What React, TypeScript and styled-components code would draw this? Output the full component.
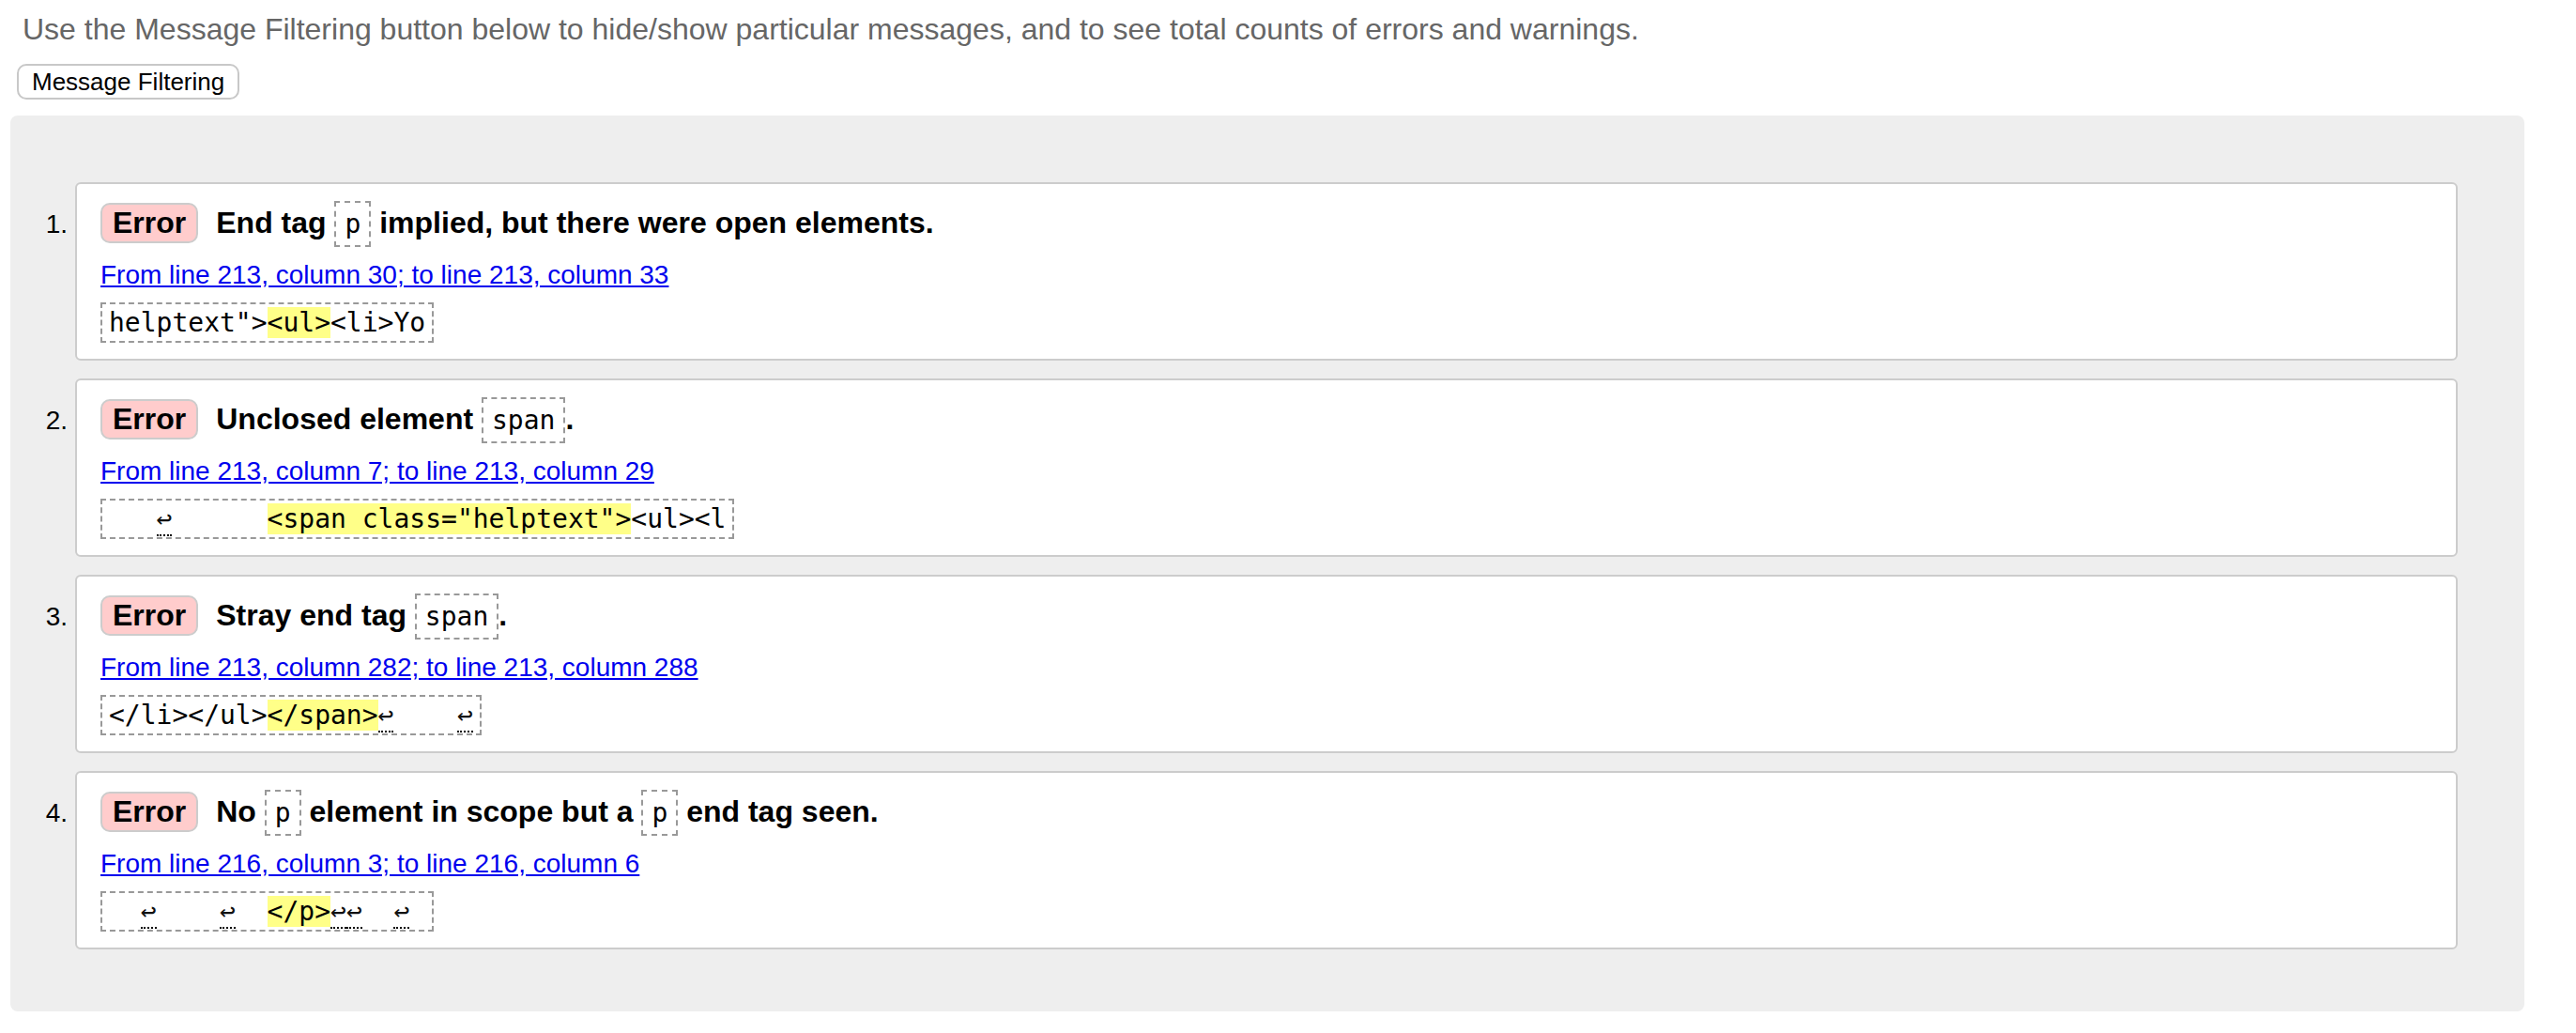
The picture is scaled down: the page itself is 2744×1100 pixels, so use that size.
import React from "react";
import styled, { createGlobalStyle } from "styled-components";

const GlobalStyle = createGlobalStyle`
  html, body { margin: 0; padding: 0; background: #fff; }
  body { font-family: "Liberation Sans", Arial, Helvetica, sans-serif; color: #000; }
`;

const Page = styled.div`
  width: 2744px;
  height: 1100px;
  box-sizing: border-box;
  padding: 13px 55px 0 11px;
`;

const Intro = styled.p`
  margin: 0 0 18px 13px;
  font-size: 32px;
  line-height: normal;
  color: #666;
`;

const FilterButton = styled.button`
  display: block;
  box-sizing: border-box;
  height: 38px;
  margin: 0 0 0 7px;
  padding: 0 14px;
  font-family: "Liberation Sans", Arial, sans-serif;
  font-size: 26px;
  color: #000;
  background: #fff;
  border: 2px solid #c8c8c8;
  border-radius: 10px;
`;

const Panel = styled.div`
  margin-top: 17px;
  background: #eee;
  border-radius: 8px;
  padding: 71px 71px 66px 0;
  display: flex;
  flex-direction: column;
  gap: 19px;
`;

const Item = styled.div`
  display: flex;
  align-items: baseline;
`;

const Index = styled.span`
  flex: none;
  width: 69px;
  box-sizing: border-box;
  padding-right: 8px;
  text-align: right;
  font-size: 28px;
`;

const Card = styled.div`
  flex: 1;
  background: #fff;
  border: 2px solid #ccc;
  border-radius: 6px;
  padding: 17px 25px 17px 25px;
`;

const Heading = styled.p`
  margin: 0;
  font-weight: bold;
  font-size: 32px;
  line-height: 49px;
`;

const Badge = styled.span`
  display: inline-block;
  padding: 1px 11px;
  margin-right: 19px;
  line-height: normal;
  background: #fcc;
  border: 2px solid #ccc;
  border-radius: 10px;
`;

const Code = styled.code`
  font-family: "DejaVu Sans Mono", Menlo, monospace;
  font-weight: normal;
  font-size: 28px;
  line-height: 32px;
  padding: 6px 9px;
  border: 2px dashed #999;
`;

const Location = styled.div`
  margin-top: 15px;
  font-size: 28px;
  line-height: normal;
`;

const Link = styled.a`
  color: #00e;
  text-decoration: underline;
`;

const Extract = styled.div`
  width: fit-content;
  margin-top: 13px;
  padding: 3px 7px;
  border: 2px dashed #999;
  font-family: "DejaVu Sans Mono", Menlo, monospace;
  font-size: 28px;
  line-height: 33px;
  white-space: pre;
`;

const Mark = styled.span`
  background: #ff8;
`;

const Lf = styled.b`
  font-weight: normal;
  color: #111;
  border-bottom: 2px dotted #000;
`;

const L = () => <Lf title="Line break">↩</Lf>;

type Msg = {
  heading: React.ReactNode;
  location: string;
  extract: React.ReactNode;
};

const messages: Msg[] = [
  {
    heading: (
      <>
        End tag <Code>p</Code> implied, but there were open elements.
      </>
    ),
    location: "From line 213, column 30; to line 213, column 33",
    extract: (
      <>
        {'helptext">'}
        <Mark>{"<ul>"}</Mark>
        {"<li>Yo"}
      </>
    ),
  },
  {
    heading: (
      <>
        Unclosed element <Code>span</Code>.
      </>
    ),
    location: "From line 213, column 7; to line 213, column 29",
    extract: (
      <>
        {"   "}
        <L />
        {"      "}
        <Mark>{'<span class="helptext">'}</Mark>
        {"<ul><l"}
      </>
    ),
  },
  {
    heading: (
      <>
        Stray end tag <Code>span</Code>.
      </>
    ),
    location: "From line 213, column 282; to line 213, column 288",
    extract: (
      <>
        {"</li></ul>"}
        <Mark>{"</span>"}</Mark>
        <L />
        {"    "}
        <L />
      </>
    ),
  },
  {
    heading: (
      <>
        No <Code>p</Code> element in scope but a <Code>p</Code> end tag seen.
      </>
    ),
    location: "From line 216, column 3; to line 216, column 6",
    extract: (
      <>
        {"  "}
        <L />
        {"    "}
        <L />
        {"  "}
        <Mark>{"</p>"}</Mark>
        <L />
        <L />
        {"  "}
        <L />
        {" "}
      </>
    ),
  },
];

export default function App() {
  return (
    <>
      <GlobalStyle />
      <Page>
        <Intro>
          Use the Message Filtering button below to hide/show particular messages, and to see total
          counts of errors and warnings.
        </Intro>
        <FilterButton type="button">Message Filtering</FilterButton>
        <Panel>
          {messages.map((m, i) => (
            <Item key={i}>
              <Index>{i + 1}.</Index>
              <Card>
                <Heading>
                  <Badge>Error</Badge>
                  {m.heading}
                </Heading>
                <Location>
                  <Link href="#">{m.location}</Link>
                </Location>
                <Extract>{m.extract}</Extract>
              </Card>
            </Item>
          ))}
        </Panel>
      </Page>
    </>
  );
}
